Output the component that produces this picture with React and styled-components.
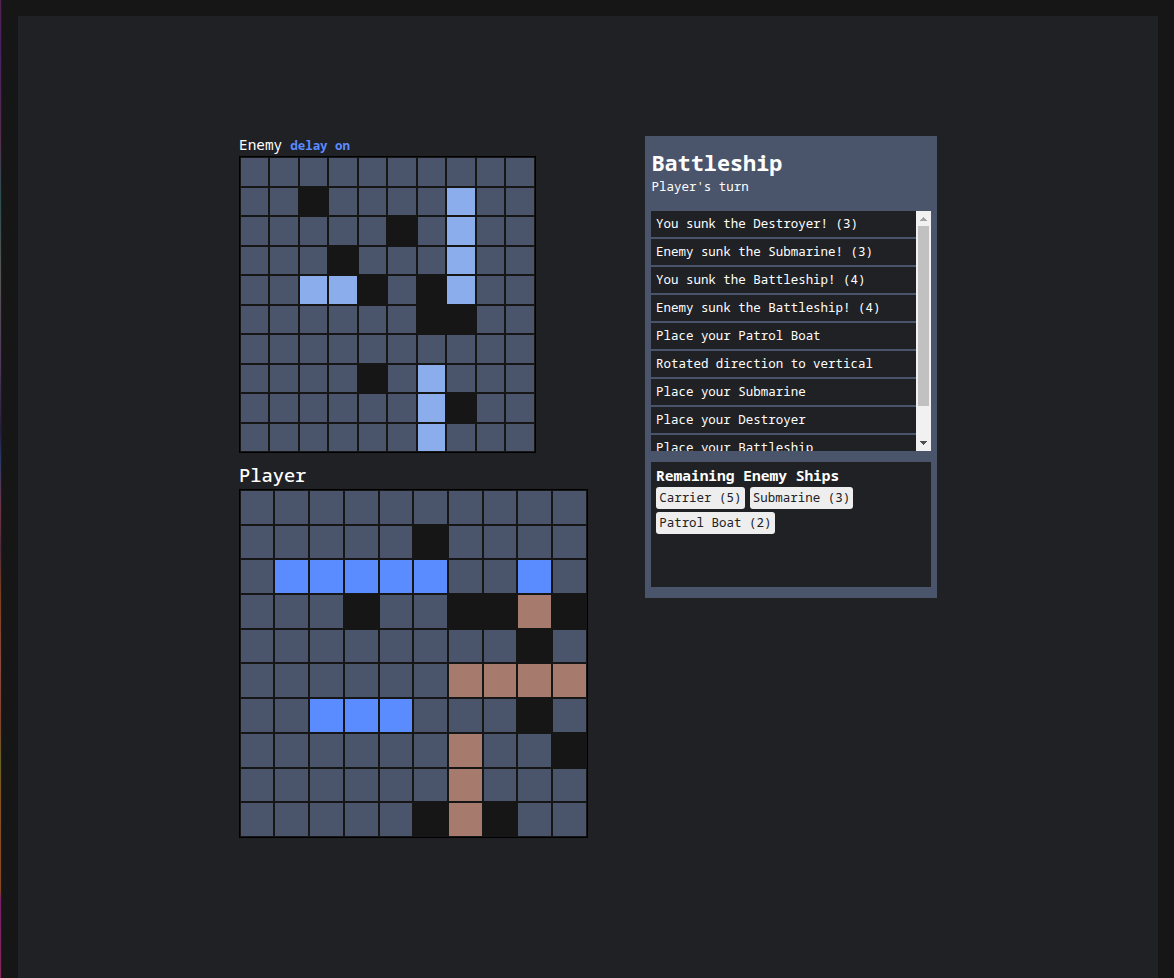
import React from "react";
import styled, { createGlobalStyle } from "styled-components";

const Global = createGlobalStyle`
  * { box-sizing: border-box; }
  body {
    margin: 0;
    background: #161616;
    color: #fff;
    font-family: "Noto Sans Mono", "DejaVu Sans Mono", monospace;
    font-size: 12.48px;
    overflow: hidden;
  }
`;

const Frame = styled.div`
  display: flex;
  height: 978px;
  padding: 16px 16px 0 0;
  background: #161616;
`;

const Edge = styled.div`
  flex: 0 0 2px;
  height: 978px;
  margin: -16px 16px 0 0;
  border-right: 1px solid #211a1e;
  background: linear-gradient(#52234f, #482063 5%, #542c4a 14%, #2c4d50 20%, #555552 28%, #50385b 37%,
    #251d3d 44%, #2a3866 47%, #713547 52%, #4d2a3c 56%, #7c401f 61%, #8a4840 68%, #80422c 74%,
    #666321 78%, #875021 82%, #854725 91%, #771e69 92%, #86285a 100%);
`;

const Page = styled.main`
  display: flex;
  flex: 1;
  align-items: flex-start;
  padding: 120px 0 0 220.75px;
  background: #202125;
`;

const Boards = styled.section`
  width: 349px;
  margin-right: 57.25px;
`;

const BoardTitle = styled.div`
  display: flex;
  align-items: baseline;
  gap: 8px;
  height: ${(p) => (p.$large ? 35.95 : 20)}px;
  padding: ${(p) => (p.$large ? "12px 0 0 0.25px" : "0 0 0 0.25px")};
  font-size: ${(p) => (p.$large ? 18.72 : 14.4)}px;
  font-weight: ${(p) => (p.$large ? 500 : 400)};
  line-height: ${(p) => (p.$large ? 20 : 18)}px;
`;

const Delay = styled.span`
  color: #5b8cff;
  font-size: 12.48px;
  font-weight: 700;
`;

const Board = styled.div`
  display: grid;
  grid-template-columns: repeat(10, 1fr);
  grid-template-rows: repeat(10, 1fr);
  width: ${(p) => p.$size}px;
  height: ${(p) => p.$size}px;
  border: 1px solid #000;
`;

const cellColors = {
  ".": "#4a556c",
  x: "#161616",
  h: "#8cadec",
  s: "#5b8cff",
  d: "#a67b6d",
};

const Cell = styled.div`
  border: 1px solid #161616;
  background: ${(p) => cellColors[p.$kind]};
`;

const Panel = styled.aside`
  width: 292px;
  height: 462px;
  padding: 15px 6px 11px;
  background: #4a556c;
`;

const Title = styled.h1`
  margin: 0;
  padding-left: 0.4px;
  font-size: 21.84px;
  line-height: 24px;
`;

const Turn = styled.div`
  height: 36px;
  padding: 1px 0 0 0.5px;
  line-height: 21px;
`;

const Log = styled.div`
  display: flex;
  height: 240px;
  margin-bottom: 11px;
  overflow: hidden;
`;

const Messages = styled.div`
  display: flex;
  flex: 1;
  flex-direction: column;
  gap: 2px;
`;

const Message = styled.div`
  flex: 0 0 26px;
  padding-left: 5px;
  background: #202125;
  line-height: 26px;
  white-space: nowrap;
`;

const ScrollTrack = styled.div`
  display: flex;
  flex-direction: column;
  align-items: center;
  width: 15px;
  background: #f1f1f1;
`;

const ScrollThumb = styled.div`
  width: 11px;
  height: 180px;
  margin-bottom: 30px;
  background: #c1c1c1;
`;

const Arrow = styled.svg`
  display: block;
  flex: 0 0 15px;
  width: 15px;
`;

const Remaining = styled.div`
  height: 125px;
  padding: 3px 5px;
  background: #202125;
`;

const Heading = styled.h2`
  margin: 0 0 2px;
  font-size: 14.56px;
  line-height: 20px;
`;

const Tags = styled.div`
  display: flex;
  flex-wrap: wrap;
  gap: 3px 5px;
`;

const Tag = styled.span`
  height: 22px;
  padding: 0 3.2px;
  border-radius: 3px;
  background: #eee;
  color: #202125;
  line-height: 22px;
`;

const enemyRows = [
  "..........",
  "..x....h..",
  ".....x.h..",
  "...x...h..",
  "..hhx.xh..",
  "......xx..",
  "..........",
  "....x.h...",
  "......hx..",
  "......h...",
];

const playerRows = [
  "..........",
  ".....x....",
  ".sssss..s.",
  "...x..xxdx",
  "........x.",
  "......dddd",
  "..sss...x.",
  "......d..x",
  "......d...",
  ".....xdx..",
];

const messages = [
  "You sunk the Destroyer! (3)",
  "Enemy sunk the Submarine! (3)",
  "You sunk the Battleship! (4)",
  "Enemy sunk the Battleship! (4)",
  "Place your Patrol Boat",
  "Rotated direction to vertical",
  "Place your Submarine",
  "Place your Destroyer",
  "Place your Battleship",
];

const ships = ["Carrier (5)", "Submarine (3)", "Patrol Boat (2)"];

function Grid({ rows, size }) {
  return (
    <Board $size={size}>
      {rows.flatMap((row, y) =>
        row.split("").map((kind, x) => <Cell key={`${x}-${y}`} $kind={kind} />)
      )}
    </Board>
  );
}

export default function App() {
  return (
    <>
      <Global />
      <Frame>
        <Edge />
        <Page>
          <Boards>
            <BoardTitle>
              Enemy <Delay>delay on</Delay>
            </BoardTitle>
            <Grid rows={enemyRows} size={297} />
            <BoardTitle $large>Player</BoardTitle>
            <Grid rows={playerRows} size={349} />
          </Boards>
          <Panel>
            <Title>Battleship</Title>
            <Turn>Player's turn</Turn>
            <Log>
              <Messages>
                {messages.map((m) => (
                  <Message key={m}>{m}</Message>
                ))}
              </Messages>
              <ScrollTrack>
                <Arrow height="15" viewBox="0 0 15 15">
                  <path d="M7 6h1v1h1v1h1v1h1v1H4V9h1V8h1V7h1z" fill="#a3a3a3" />
                </Arrow>
                <ScrollThumb />
                <Arrow height="15" viewBox="0 0 15 15">
                  <path d="M4 5h7v1h-1v1H9v1H8v1H7V8H6V7H5V6H4z" fill="#505050" />
                </Arrow>
              </ScrollTrack>
            </Log>
            <Remaining>
              <Heading>Remaining Enemy Ships</Heading>
              <Tags>
                {ships.map((s) => (
                  <Tag key={s}>{s}</Tag>
                ))}
              </Tags>
            </Remaining>
          </Panel>
        </Page>
      </Frame>
    </>
  );
}
